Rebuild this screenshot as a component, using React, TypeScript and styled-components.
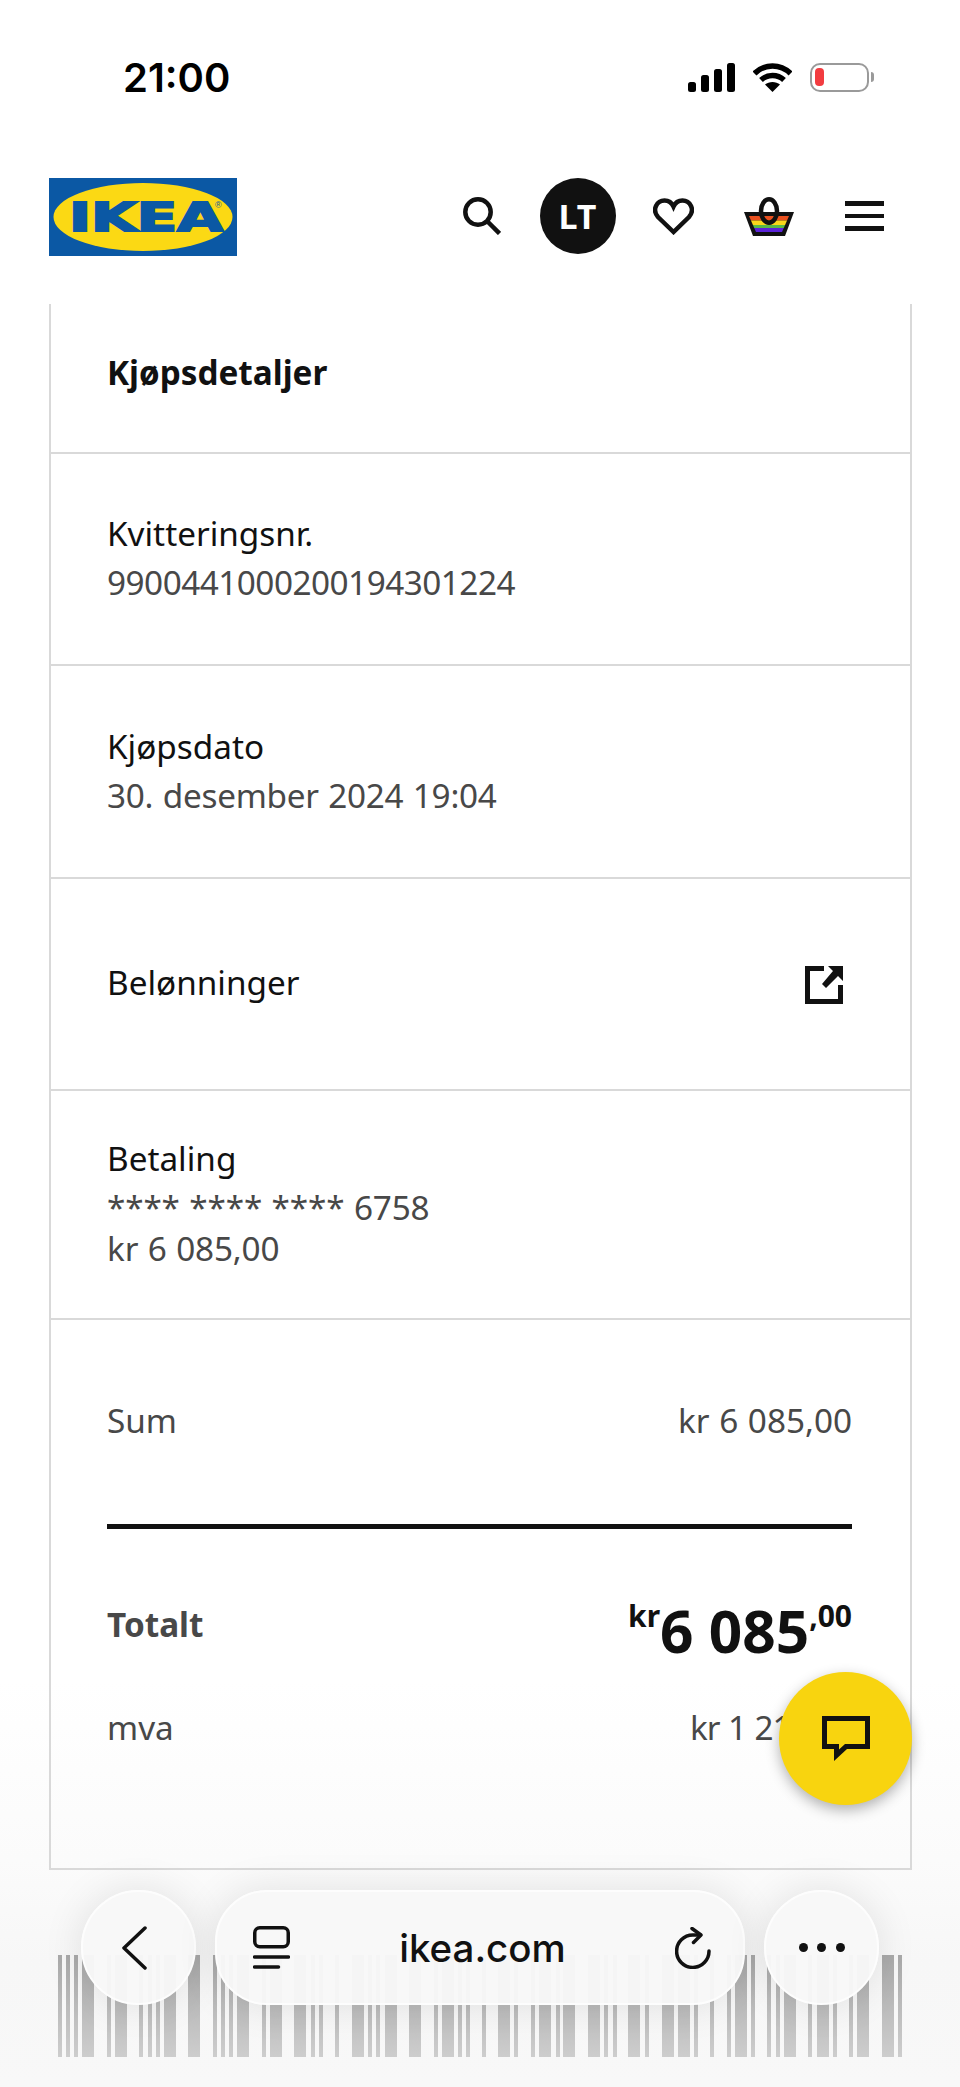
import styled, { createGlobalStyle } from 'styled-components';

const BARS: [number, number][] = [
  [58, 4], [66, 4], [74, 4], [82, 12], [107, 4], [115, 12], [139, 4], [148, 4], [156, 4], [164, 12],
  [188, 12], [213, 4], [221, 4], [229, 4], [237, 12], [262, 4], [270, 12], [294, 12], [311, 4], [319, 4],
  [335, 4], [352, 12], [368, 4], [376, 4], [385, 12], [409, 12], [434, 4], [442, 12], [458, 4], [466, 4],
  [482, 4], [498, 12], [514, 4], [531, 4], [539, 12], [556, 4], [563, 12], [588, 12], [604, 4], [613, 4],
  [628, 12], [645, 4], [662, 12], [678, 12], [694, 4], [710, 4], [727, 4], [735, 12], [751, 4], [767, 4],
  [776, 4], [784, 12], [808, 4], [817, 12], [833, 4], [849, 4], [857, 12], [882, 12], [898, 4],
];

const IkeaLogo = () => (
  <svg width="188" height="78" viewBox="0 0 188 78">
    <rect width="188" height="78" fill="#0b58a4" />
    <ellipse cx="94" cy="39" rx="89.500" ry="34" fill="#fbd914" />
    <text
      x="20"
      y="53"
      textLength="154"
      lengthAdjust="spacingAndGlyphs"
      fontFamily="'DejaVu Sans', sans-serif"
      fontWeight="700"
      fontSize="38.500"
      fill="#0b58a4"
      stroke="#0b58a4"
      strokeWidth="2"
    >
      IKEA
    </text>
    <text x="166" y="30" fontFamily="'Liberation Sans', sans-serif" fontSize="9" fill="#0b58a4">
      ®
    </text>
  </svg>
);

const SearchIcon = () => (
  <svg width="38" height="38" viewBox="0 0 38 38" fill="none" stroke="#111" strokeWidth="4.5">
    <circle cx="15" cy="15" r="12.7" />
    <path d="M24.5 24.5L36.5 36.5" />
  </svg>
);

const HeartIcon = () => (
  <svg width="41" height="37" viewBox="0 0 41 37" fill="none" stroke="#111" strokeWidth="4.5">
    <path d="M20.5 34L5 19C-1.5 11.5 4 2.5 11.5 2.5C15.5 2.5 18.8 4.8 20.5 8.5C22.2 4.8 25.5 2.5 29.5 2.5C37 2.5 42.500 11.500 36 19Z" />
  </svg>
);

const BasketIcon = () => (
  <svg width="50" height="39" viewBox="0 0 50 39">
    <clipPath id="basket-inside">
      <path d="M5 19H45L38 35H12Z" />
    </clipPath>
    <path d="M0 15H50L41 39H9Z" fill="#111" />
    <g clipPath="url(#basket-inside)">
      <rect y="19" width="50" height="4.500" fill="#e9501f" />
      <rect y="23.500" width="50" height="4.500" fill="#f9d61a" />
      <rect y="28" width="50" height="3" fill="#58b947" />
      <rect y="31" width="50" height="4" fill="#5a22d8" />
    </g>
    <ellipse cx="25" cy="14" rx="8" ry="11.700" fill="none" stroke="#111" strokeWidth="4.500" />
  </svg>
);

const ExternalIcon = () => (
  <svg width="38" height="38" viewBox="0 0 38 38" fill="#111">
    <path d="M0 0H19V5H5V33H33V19H38V38H0Z" />
    <path d="M23 0H38V15L33 10L21 22L17 18L28 5Z" />
  </svg>
);

const ChatIcon = () => (
  <svg width="48" height="45" viewBox="0 0 48 45" fill="#111">
    <path fillRule="evenodd" d="M0 0H48V33H25L12 45V33H0ZM5 5V28H17V33.500L23 28H43V5Z" />
  </svg>
);

const WifiIcon = () => (
  <svg width="39" height="29" viewBox="0 0 39 29" fill="none" stroke="#000" strokeWidth="5.500">
    <path d="M1.500 10.500C11.500 0.500 27.500 0.500 37.500 10.500" />
    <path d="M8 17C14.500 11 24.500 11 31 17" />
    <path d="M19.500 29L12 21.500C16 18 23 18 27 21.500Z" fill="#000" stroke="none" />
  </svg>
);

const TabsIcon = () => (
  <svg width="37" height="43" viewBox="0 0 37 43" fill="none" stroke="#111" strokeWidth="3.500" strokeLinecap="round">
    <rect x="1.750" y="1.750" width="33.500" height="19" rx="5" />
    <path d="M1.500 31H35.500" />
    <path d="M1.500 41H25.500" />
  </svg>
);

const ReloadIcon = () => (
  <svg width="36" height="42" viewBox="0 0 36 42" fill="none" stroke="#111" strokeWidth="3.500" strokeLinecap="round" strokeLinejoin="round">
    <path d="M34 24A16.200 16.200 0 1 1 17.800 8H25" />
    <path d="M17 1.500L26 8L18.500 15.500" />
  </svg>
);

const BackIcon = () => (
  <svg width="25" height="44" viewBox="0 0 25 44" fill="none" stroke="#111" strokeWidth="3.500" strokeLinecap="round" strokeLinejoin="round">
    <path d="M23 2L2 22L23 42" />
  </svg>
);

const App = () => {
  return (
    <Page>
      <GlobalStyle />
      <StatusBar>
        <Clock>21:00</Clock>
        <StatusIcons>
          <Signal>
            <SignalBar $height={10} />
            <SignalBar $height={17} />
            <SignalBar $height={23} />
            <SignalBar $height={29} />
          </Signal>
          <WifiIcon />
          <Battery>
            <BatteryLevel />
          </Battery>
        </StatusIcons>
      </StatusBar>

      <Header>
        <IkeaLogo />
        <Nav>
          <NavButton>
            <SearchIcon />
          </NavButton>
          <Avatar>LT</Avatar>
          <NavButton>
            <HeartIcon />
          </NavButton>
          <NavButton>
            <BasketIcon />
          </NavButton>
          <NavButton>
            <Burger>
              <span />
              <span />
              <span />
            </Burger>
          </NavButton>
        </Nav>
      </Header>

      <Card>
        <HeadRow>
          <Heading>Kjøpsdetaljer</Heading>
        </HeadRow>
        <Row $height={212}>
          <Label>Kvitteringsnr.</Label>
          <Value $tracking={-0.5}>9900441000200194301224</Value>
        </Row>
        <Row $height={213}>
          <Label>Kjøpsdato</Label>
          <Value $tracking={-0.25}>30. desember 2024 19:04</Value>
        </Row>
        <LinkRow>
          <Label>Belønninger</Label>
          <ExternalIcon />
        </LinkRow>
        <Row $height={229}>
          <Label>Betaling</Label>
          <Value $tracking={-0.15}>
            **** **** **** 6758
            <br />
            kr 6 085,00
          </Value>
        </Row>
        <Summary>
          <SummaryRow>
            <Value>Sum</Value>
            <Value>kr 6 085,00</Value>
          </SummaryRow>
          <Rule />
          <TotalRow>
            <TotalLabel>Totalt</TotalLabel>
            <Price>
              <PriceSmall>kr</PriceSmall>
              <PriceBig>6 085</PriceBig>
              <PriceSmall>,00</PriceSmall>
            </Price>
          </TotalRow>
          <TaxRow>
            <Value>mva</Value>
            <Value $tracking={-1.1}>kr 1 217,00</Value>
          </TaxRow>
        </Summary>
      </Card>

      <ChatButton>
        <ChatIcon />
      </ChatButton>

      <BottomZone>
        <Barcode width="844" height="102" viewBox="58 0 844 102">
          <defs>
            <linearGradient id="bar-fade" gradientUnits="userSpaceOnUse" x1="0" y1="0" x2="0" y2="102">
              <stop offset="0" stopColor="#a9a9a9" />
              <stop offset="1" stopColor="#cdcdcd" />
            </linearGradient>
          </defs>
          {BARS.map(([x, w]) => (
            <rect key={x} x={x} y="0" width={w} height="102" fill="url(#bar-fade)" />
          ))}
        </Barcode>
        <Toolbar>
          <BackPill>
            <BackIcon />
          </BackPill>
          <AddressPill>
            <TabsIcon />
            <Address>ikea.com</Address>
            <ReloadIcon />
          </AddressPill>
          <RoundPill>
            <Dots>
              <span />
              <span />
              <span />
            </Dots>
          </RoundPill>
        </Toolbar>
      </BottomZone>
    </Page>
  );
};

export default App;

const GlobalStyle = createGlobalStyle`
  html, body {
    margin: 0;
    padding: 0;
  }

  body {
    font-family: 'Noto Sans', sans-serif;
  }
`;

const Page = styled.div`
  position: relative;
  width: 960px;
  height: 2087px;
  overflow: hidden;
  background: linear-gradient(#fff 0, #fff 1680px, #fbfbfb 1860px, #f7f7f7 1960px, #f8f8f8 2087px);
`;

const StatusBar = styled.div`
  height: 178px;
  padding: 55px 87px 0 123px;
  box-sizing: border-box;
  display: flex;
  justify-content: space-between;
  align-items: flex-start;
`;

const Clock = styled.div`
  font-family: 'Inter', sans-serif;
  font-size: 40px;
  font-weight: 600;
  line-height: 46px;
  color: #000;
`;

const StatusIcons = styled.div`
  display: flex;
  align-items: flex-end;
  gap: 18px;
  margin-top: 8px;
  height: 29px;
`;

const Signal = styled.div`
  display: flex;
  align-items: flex-end;
  gap: 5px;
`;

const SignalBar = styled.div<{ $height: number }>`
  width: 8px;
  height: ${(p) => p.$height}px;
  border-radius: 2.5px;
  background: #000;
`;

const Battery = styled.div`
  position: relative;
  width: 59px;
  height: 29px;
  box-sizing: border-box;
  border: 2.5px solid #9a9a9a;
  border-radius: 10px;
  margin-right: 4px;
  padding: 3px;

  &::after {
    content: '';
    position: absolute;
    right: -7px;
    top: 7px;
    width: 3px;
    height: 10px;
    border-radius: 0 3px 3px 0;
    background: #9a9a9a;
  }
`;

const BatteryLevel = styled.div`
  width: 9px;
  height: 18px;
  border-radius: 4px;
  background: #f23c40;
`;

const Header = styled.div`
  height: 126px;
  padding: 0 58px 0 49px;
  display: flex;
  justify-content: space-between;
  align-items: flex-start;
`;

const Nav = styled.div`
  display: flex;
  gap: 19.5px;
`;

const NavButton = styled.div`
  width: 76px;
  height: 76px;
  display: flex;
  align-items: center;
  justify-content: center;
`;

const Avatar = styled(NavButton)`
  border-radius: 50%;
  background: #111;
  color: #fff;
  font-size: 34px;
  font-weight: 700;
`;

const Burger = styled.div`
  width: 39px;
  display: flex;
  flex-direction: column;
  gap: 8px;

  > span {
    height: 4.5px;
    background: #111;
  }
`;

const Card = styled.div`
  width: 863px;
  margin-left: 49px;
  box-sizing: border-box;
  border-left: 2px solid #d9d9d9;
  border-right: 2px solid #d9d9d9;
  border-bottom: 2px solid #d9d9d9;
`;

const HeadRow = styled.div`
  height: 150px;
  box-sizing: border-box;
  padding: 0 56px 12px;
  display: flex;
  align-items: center;
  border-bottom: 2px solid #d9d9d9;
`;

const Heading = styled.div`
  font-size: 33.3px;
  font-weight: 700;
  color: #111;
`;

const Row = styled.div<{ $height: number }>`
  height: ${(p) => p.$height}px;
  box-sizing: border-box;
  padding: 0 56px 10px;
  display: flex;
  flex-direction: column;
  justify-content: center;
  border-bottom: 2px solid #d9d9d9;
`;

const LinkRow = styled.div`
  height: 212px;
  box-sizing: border-box;
  padding: 0 67px 3px 56px;
  display: flex;
  align-items: center;
  justify-content: space-between;
  border-bottom: 2px solid #d9d9d9;

  > svg {
    margin-top: 5px;
  }
`;

const Label = styled.div`
  font-size: 33.3px;
  line-height: 57px;
  color: #111;
`;

const Value = styled.div<{ $tracking?: number }>`
  font-size: 33.3px;
  line-height: 41px;
  letter-spacing: ${(p) => p.$tracking ?? 0}px;
  word-spacing: 1px;
  color: #484848;
`;

const Summary = styled.div`
  padding: 76px 58px 117px 56px;
`;

const SummaryRow = styled.div`
  height: 48px;
  display: flex;
  justify-content: space-between;
  align-items: center;
`;

const Rule = styled.div`
  height: 5px;
  margin-top: 80px;
  background: #111;
`;

const TotalRow = styled.div`
  height: 64px;
  margin-top: 64px;
  display: flex;
  justify-content: space-between;
  align-items: center;
`;

const TotalLabel = styled.div`
  font-size: 33.3px;
  font-weight: 700;
  color: #484848;
  padding-bottom: 3px;
`;

const Price = styled.div`
  display: flex;
  align-items: flex-start;
  padding-top: 10px;
  color: #111;
  font-weight: 700;
`;

const PriceBig = styled.div`
  font-size: 58.5px;
  line-height: 64px;
`;

const PriceSmall = styled.div`
  font-size: 30px;
  line-height: 36px;
`;

const TaxRow = styled(SummaryRow)`
  margin-top: 46px;
`;

const ChatButton = styled.div`
  position: absolute;
  left: 779px;
  top: 1672px;
  width: 133px;
  height: 133px;
  border-radius: 50%;
  background: #f8d40f;
  box-shadow: 0 5px 14px rgba(0, 0, 0, 0.3);
  display: flex;
  align-items: center;
  justify-content: center;
`;

const BottomZone = styled.div`
  position: relative;
  padding-top: 85px;
`;

const Barcode = styled.svg`
  display: block;
  margin-left: 58px;
`;

const Toolbar = styled.div`
  position: absolute;
  left: 81px;
  top: 20px;
  display: flex;
  gap: 19px;
`;

const RoundPill = styled.div`
  width: 115px;
  height: 115px;
  box-sizing: border-box;
  border-radius: 50%;
  border: 2px solid #fdfdfd;
  background: rgba(248, 248, 248, 0.96);
  box-shadow: 0 0 40px rgba(0, 0, 0, 0.1);
  display: flex;
  align-items: center;
  justify-content: center;
`;

const BackPill = styled(RoundPill)`
  padding-right: 8px;
`;

const AddressPill = styled.div`
  width: 530px;
  height: 115px;
  box-sizing: border-box;
  border-radius: 52px;
  border: 2px solid #fdfdfd;
  background: rgba(248, 248, 248, 0.96);
  box-shadow: 0 0 40px rgba(0, 0, 0, 0.1);
  padding: 0 32px 0 36px;
  display: flex;
  align-items: center;
  justify-content: space-between;
`;

const Address = styled.div`
  font-family: 'Inter', sans-serif;
  font-size: 38.5px;
  font-weight: 500;
  color: #111;
`;

const Dots = styled.div`
  display: flex;
  gap: 9.5px;

  > span {
    width: 9px;
    height: 9px;
    border-radius: 50%;
    background: #111;
  }
`;
